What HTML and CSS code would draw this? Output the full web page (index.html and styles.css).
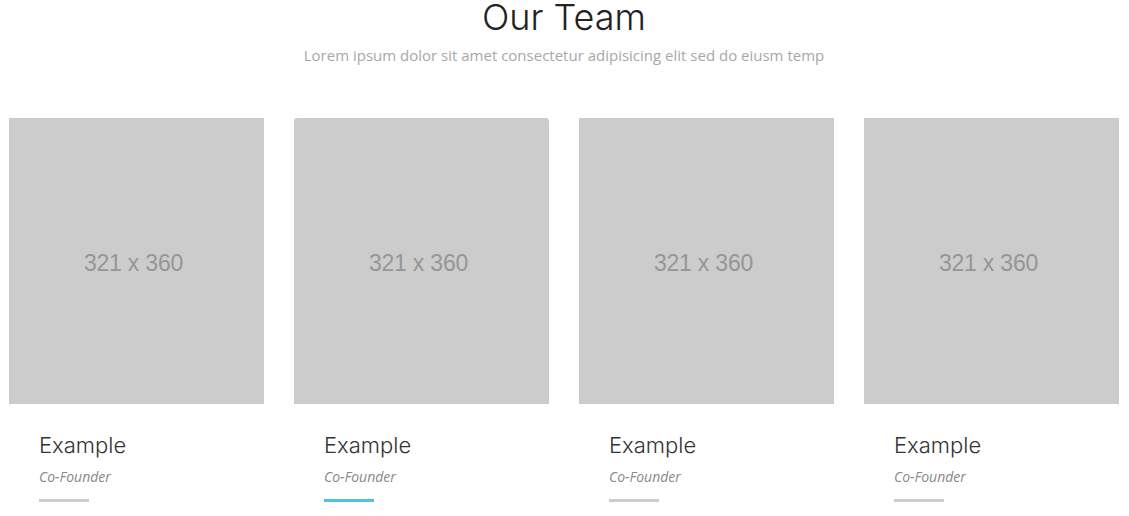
FILE: index.html
```html
<!DOCTYPE html>
<html lang="en">
<head>
<meta charset="utf-8">
<title>Our Team</title>
<link rel="stylesheet" href="styles.css">
</head>
<body>
<section class="team">
  <header class="team-head">
    <h1 class="team-title">Our Team</h1>
    <p class="team-sub">Lorem ipsum dolor sit amet consectetur adipisicing elit sed do eiusm temp</p>
  </header>
  <div class="team-grid">
    <article class="member">
      <div class="photo"><span>321 x 360</span></div>
      <div class="info">
        <h2 class="name">Example</h2>
        <p class="role">Co-Founder</p>
        <div class="bar"></div>
      </div>
    </article>
    <article class="member active">
      <div class="photo"><span>321 x 360</span></div>
      <div class="info">
        <h2 class="name">Example</h2>
        <p class="role">Co-Founder</p>
        <div class="bar"></div>
      </div>
    </article>
    <article class="member">
      <div class="photo"><span>321 x 360</span></div>
      <div class="info">
        <h2 class="name">Example</h2>
        <p class="role">Co-Founder</p>
        <div class="bar"></div>
      </div>
    </article>
    <article class="member">
      <div class="photo"><span>321 x 360</span></div>
      <div class="info">
        <h2 class="name">Example</h2>
        <p class="role">Co-Founder</p>
        <div class="bar"></div>
      </div>
    </article>
  </div>
</section>
</body>
</html>
```
FILE: styles.css
```css
html, body {
  margin: 0;
  padding: 0;
  background: #fff;
}

.team {
  padding: 1px 10px 0 9px;
}

.team-head {
  text-align: center;
}

.team-title {
  margin: 0;
  font-family: Inter, "Open Sans", sans-serif;
  font-weight: 300;
  font-size: 36px;
  line-height: 33px;
  color: #222;
}

.team-sub {
  margin: 9px 0 0;
  font-family: "Open Sans", sans-serif;
  font-size: 15px;
  line-height: 24px;
  color: #a8a8a8;
}

.team-grid {
  margin-top: 51px;
  display: grid;
  grid-template-columns: repeat(4, 255px);
  column-gap: 30px;
}

.photo {
  height: 286px;
  background: #cccccc;
  display: flex;
  align-items: center;
  justify-content: center;
}

.photo span {
  font-family: "Liberation Sans", Arial, sans-serif;
  font-size: 23px;
  letter-spacing: -0.2px;
  color: #969696;
  position: relative;
  top: 2px;
  left: -3px;
}

.active .photo {
  border-radius: 3px 3px 0 0;
}

.info {
  padding: 28px 30px 0;
}

.name {
  margin: 0;
  font-family: Inter, "Open Sans", sans-serif;
  font-weight: 300;
  font-size: 22px;
  line-height: 26px;
  color: #333;
}

.role {
  margin: 9px 0 0;
  font-family: "Open Sans", sans-serif;
  font-style: italic;
  font-size: 14px;
  line-height: 20px;
  color: #888;
}

.bar {
  margin-top: 12px;
  width: 50px;
  height: 3px;
  background: #cccccc;
}

.active .bar {
  background: #4fc3e3;
}
```
